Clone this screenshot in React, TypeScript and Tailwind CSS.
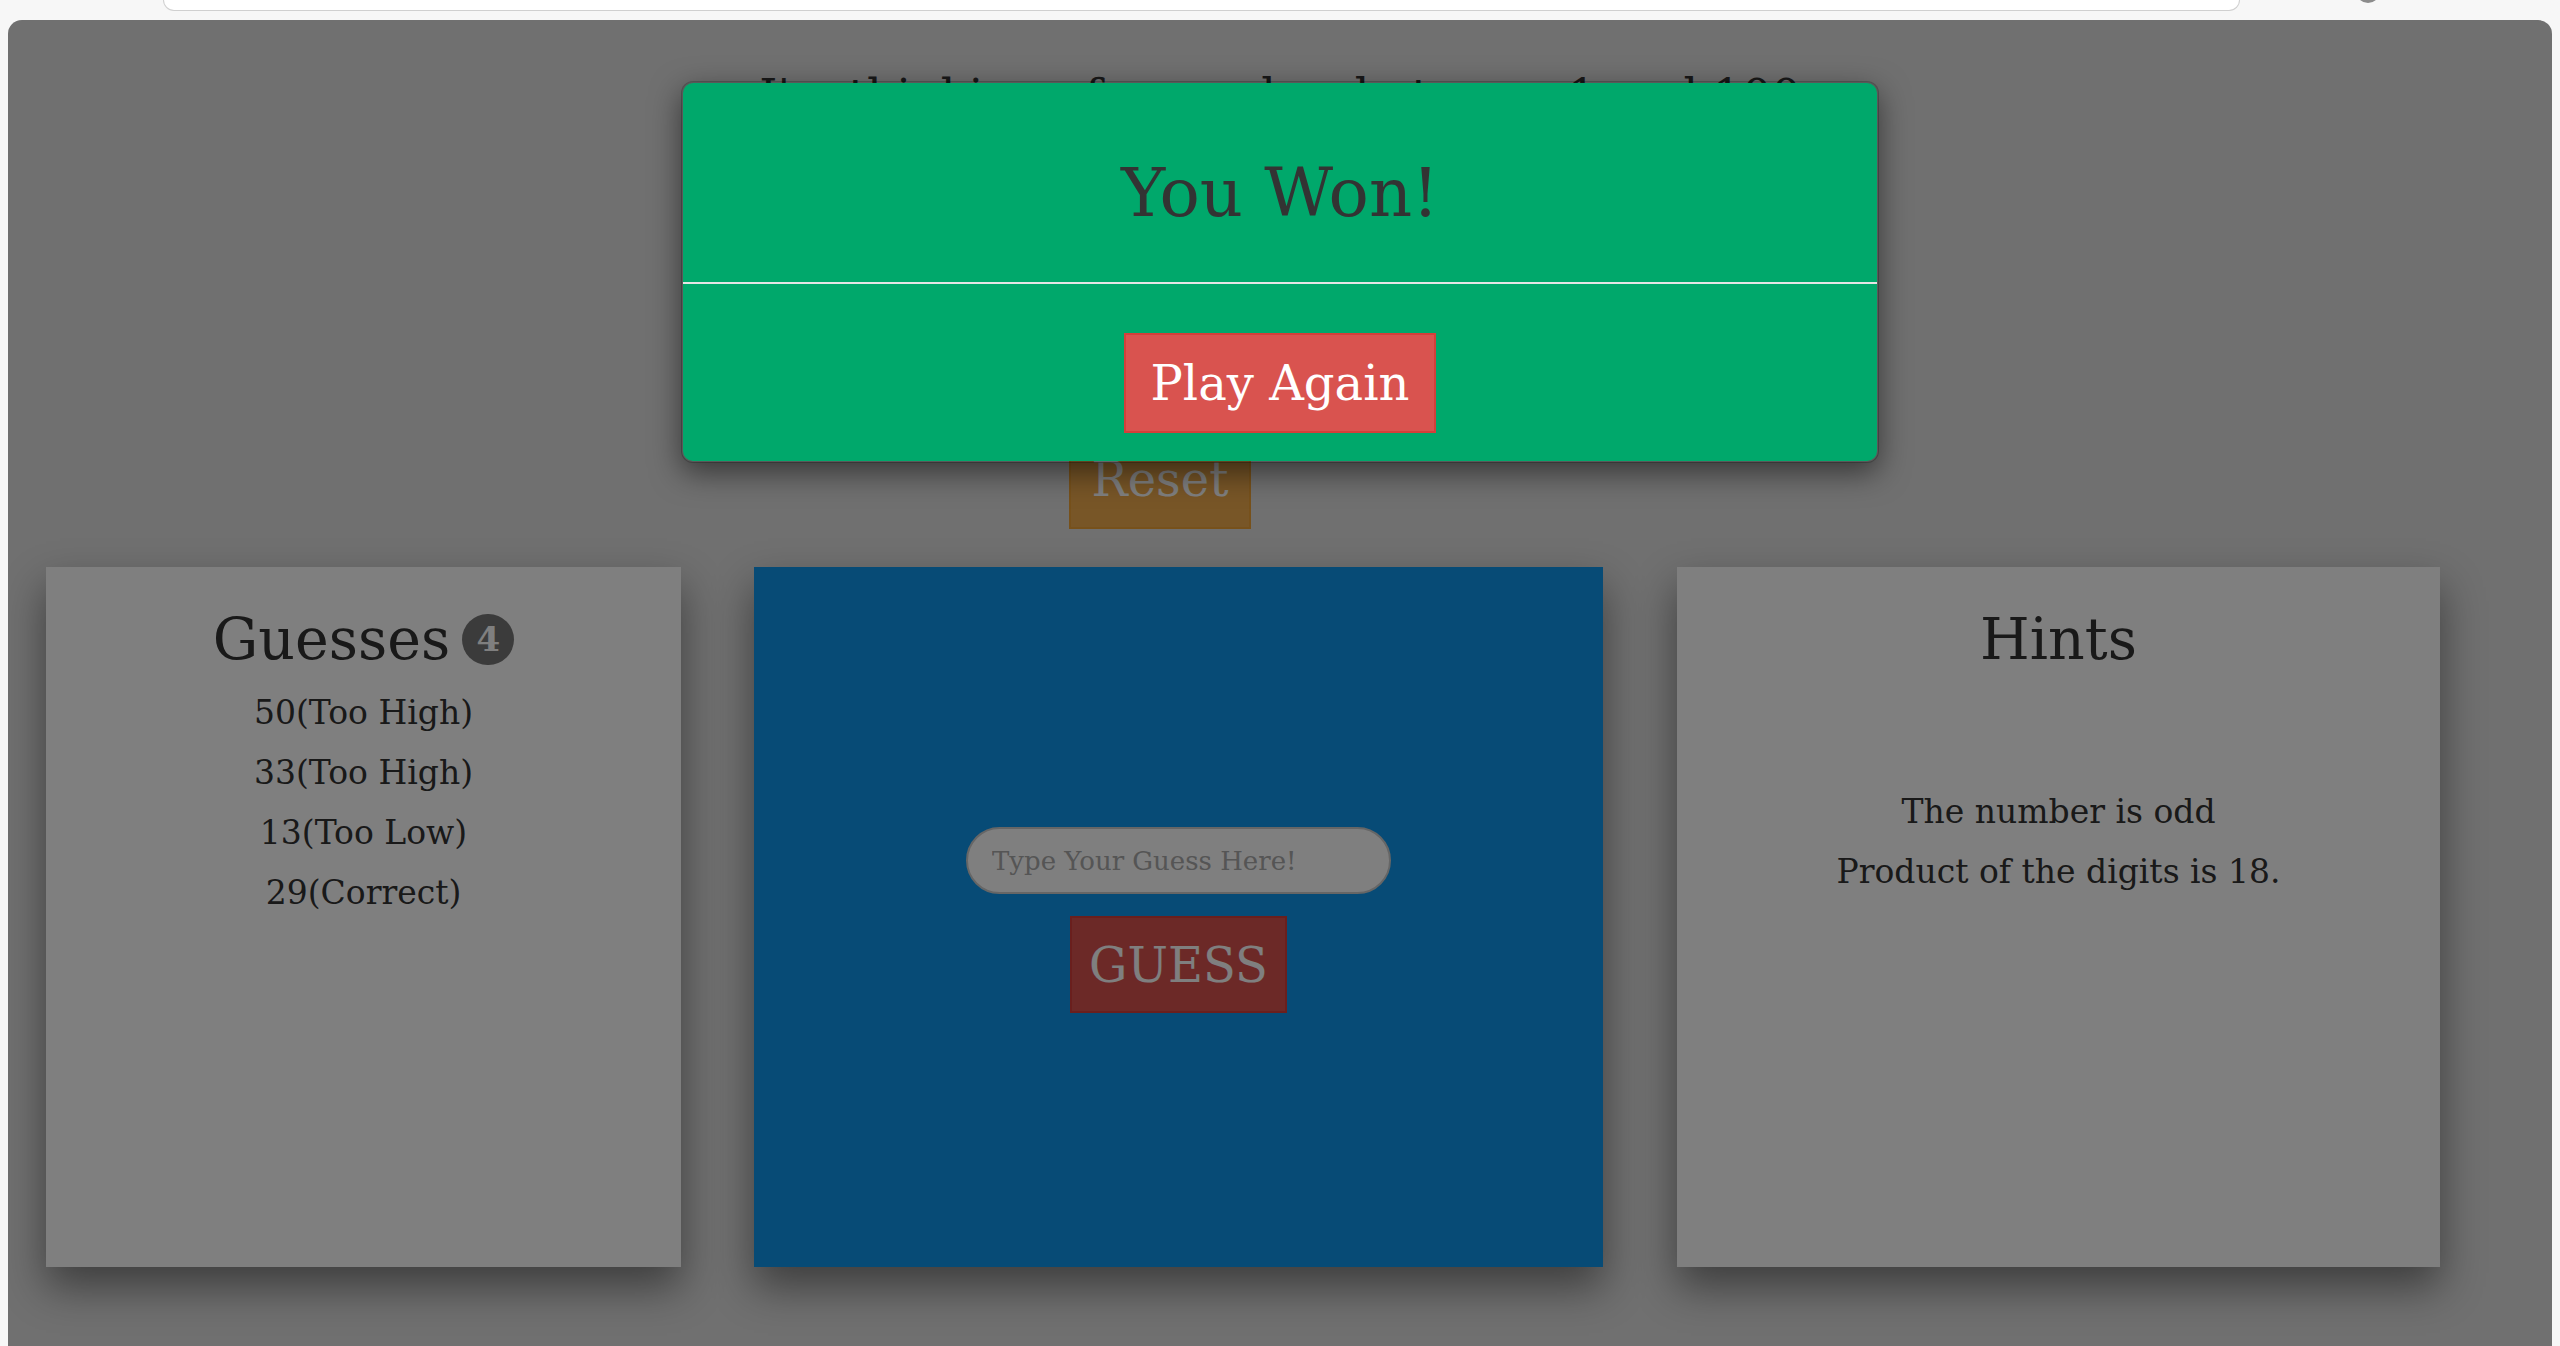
import React from "react";

const guesses = ["50(Too High)", "33(Too High)", "13(Too Low)", "29(Correct)"];
const hints = ["The number is odd", "Product of the digits is 18."];

function Card({ className, children }: { className: string; children: React.ReactNode }) {
  return (
    <div className={`h-[700px] shrink-0 shadow-[0_20px_40px_rgba(0,0,0,0.45)] ${className}`}>
      {children}
    </div>
  );
}

export default function App() {
  return (
    <div className="min-h-screen overflow-hidden bg-[#f7f7f7] font-['DejaVu_Serif',serif] text-[#333]">
      {/* browser chrome strip */}
      <div className="flex h-[20px] items-start">
        <div className="ml-[163px] h-[11px] w-[2077px] rounded-b-[16px] border border-t-0 border-[#d0d0d0] bg-white" />
        <div className="ml-[116px] mt-[-21px] h-[24px] w-[24px] rounded-full bg-[#8c8c8c]" />
      </div>

      <div className="relative mx-[8px] h-[1326px] overflow-hidden rounded-t-[14px] bg-[#e0e0e0]">
        <h1 className="pt-[51px] text-center text-[46px] leading-[51px]">
          I'm thinking of a number between 1 and 100
        </h1>

        <div className="mt-[307px] flex justify-center">
          <button className="mr-[240px] flex h-[100px] w-[182px] items-center justify-center border-2 border-[#eea236] bg-[#f0ad4e] text-[48px] leading-[48px] text-white">
            Reset
          </button>
        </div>

        <div className="mt-[38px] flex pl-[38px]">
          {/* Guesses */}
          <Card className="w-[635px] bg-white pt-[39px]">
            <div className="flex h-[66px] items-center justify-center gap-[12px]">
              <h2 className="text-[57px] leading-[66px]">Guesses</h2>
              <span className="flex h-[51px] w-[52px] items-center justify-center rounded-full bg-[#777] text-[34px] font-bold leading-none text-white">
                {guesses.length}
              </span>
            </div>
            <div className="mt-[11px] text-center">
              {guesses.map((g) => (
                <p key={g} className="text-[33px] leading-[60px]">
                  {g}
                </p>
              ))}
            </div>
          </Card>

          {/* Input */}
          <Card className="ml-[73px] flex w-[849px] flex-col items-center justify-center gap-[22px] bg-[#0e96ec] pt-[6px]">
            <input
              type="text"
              placeholder="Type Your Guess Here!"
              className="h-[67px] w-[425px] rounded-full border-2 border-[#ccc] bg-white px-[24px] text-[26px] outline-none placeholder:text-[#aaa]"
            />
            <button className="flex h-[97px] w-[217px] items-center justify-center border-2 border-[#d43f3a] bg-[#d9534f] text-[48px] leading-[48px] text-white">
              GUESS
            </button>
          </Card>

          {/* Hints */}
          <Card className="ml-[74px] w-[763px] bg-white pt-[39px] text-center">
            <h2 className="text-[57px] leading-[66px]">Hints</h2>
            <div className="mt-[110px]">
              {hints.map((h) => (
                <p key={h} className="text-[33px] leading-[60px]">
                  {h}
                </p>
              ))}
            </div>
          </Card>
        </div>

        {/* modal backdrop */}
        <div className="absolute inset-0 flex justify-center bg-black/50 pt-[61px]">
          <div className="h-[382px] w-[1198px] rounded-[12px] border-2 border-black/20 bg-[#00a86b] bg-clip-padding shadow-[0_10px_30px_rgba(0,0,0,0.5)]">
            <div className="border-b-2 border-[#e5e5e5] pb-[50px] pt-[71px] text-center">
              <h3 className="text-[67px] leading-[78px] text-[#333]">You Won!</h3>
            </div>
            <div className="flex justify-center pb-[28px] pt-[49px]">
              <button className="flex h-[100px] w-[312px] items-center justify-center border-2 border-[#d43f3a] bg-[#d9534f] text-[48px] leading-[48px] text-white">
                Play Again
              </button>
            </div>
          </div>
        </div>
      </div>
    </div>
  );
}
